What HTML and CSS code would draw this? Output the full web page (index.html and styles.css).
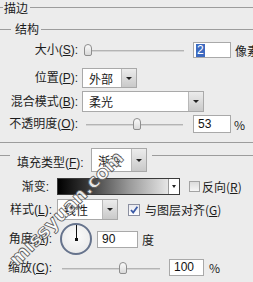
FILE: index.html
```html
<!DOCTYPE html>
<html lang="zh-CN">
<head>
<meta charset="utf-8">
<title>描边</title>
<link rel="stylesheet" href="styles.css">
</head>
<body>
<div class="dialog">
  <div class="legend legend-top">
    <span class="line l-3"></span>
    <span class="ltext t-top">描边</span>
    <span class="line grow"></span>
  </div>
  <div class="legend legend-sub">
    <span class="line l-11"></span>
    <span class="ltext t-sub">结构</span>
    <span class="line grow"></span>
  </div>

  <div class="row row-size">
    <span class="lbl lbl-78">大小(<u>S</u>):</span>
    <div class="slider sl-size"><span class="track"></span><span class="thumb" style="left:0px"></span></div>
    <div class="field f-size"><span class="hl">2</span></div>
    <span class="unit">像素</span>
  </div>

  <div class="row row-pos">
    <span class="lbl lbl-78">位置(<u>P</u>):</span>
    <div class="select s-pos"><span class="sval">外部</span><span class="sbtn"><i class="tri"></i></span></div>
  </div>

  <div class="row row-blend">
    <span class="lbl lbl-78">混合模式(<u>B</u>):</span>
    <div class="select s-blend"><span class="sval">柔光</span><span class="sbtn"><i class="tri"></i></span></div>
  </div>

  <div class="row row-opa">
    <span class="lbl lbl-78">不透明度(<u>O</u>):</span>
    <div class="slider sl-opa"><span class="track"></span><span class="thumb" style="left:47px"></span></div>
    <div class="field f-opa">53</div>
    <span class="unit u-pct">%</span>
  </div>

  <div class="sep"></div>

  <div class="legend legend-fill">
    <span class="line l-10"></span>
    <span class="lbl lbl-fill">填充类型(<u>F</u>):</span>
    <div class="select s-fill"><span class="sval">渐变</span><span class="sbtn"><i class="tri"></i></span></div>
    <span class="line grow l-fillr"></span>
  </div>

  <div class="row row-grad">
    <span class="lbl lbl-49">渐变:</span>
    <div class="gradbox"><span class="gfill"></span><span class="gbtn"><i class="tri small"></i></span></div>
    <span class="check c-rev"></span>
    <span class="ctext">反向(<u>R</u>)</span>
  </div>

  <div class="row row-style">
    <span class="lbl lbl-52">样式(<u>L</u>):</span>
    <div class="select s-style"><span class="sval">线性</span><span class="sbtn"><i class="tri"></i></span></div>
    <span class="check checked c-align"><svg width="10" height="10" viewBox="0 0 10 10"><path d="M2 5 L4.2 7.6 L8.4 1.8" fill="none" stroke="#3b5aa6" stroke-width="1.8"/></svg></span>
    <span class="ctext">与图层对齐(<u>G</u>)</span>
  </div>

  <div class="row row-angle">
    <span class="lbl lbl-52">角度(<u>A</u>):</span>
    <div class="dial"><span class="hand"></span><span class="dot"></span></div>
    <div class="field f-angle">90</div>
    <span class="unit">度</span>
  </div>

  <div class="row row-scale">
    <span class="lbl lbl-52">缩放(<u>C</u>):</span>
    <div class="slider sl-scale"><span class="track"></span><span class="thumb" style="left:57px"></span></div>
    <div class="field f-scale">100</div>
    <span class="unit u-pct2">%</span>
  </div>

  <div class="watermark">missyuan.com</div>
</div>
</body>
</html>
```

FILE: styles.css
```css
* { box-sizing: border-box; }
html, body { margin: 0; padding: 0; }
body {
  width: 253px;
  height: 282px;
  overflow: hidden;
  background: #ececec;
  font-family: "Liberation Sans", "Noto Sans CJK SC", sans-serif;
  font-size: 12px;
  color: #1c1c1c;
}
.dialog { position: relative; width: 253px; height: 282px; overflow: hidden; }
u { text-decoration: underline; text-underline-offset: 1px; }

/* group legends */
.legend { display: flex; align-items: center; height: 14px; }
.line { display: block; height: 1px; background: #9c9c9c; flex: none; }
.grow { flex: 1; }
.l-3 { width: 3px; }
.l-11 { width: 11px; }
.l-10 { width: 10px; }
.ltext { line-height: 14px; font-family: "Noto Sans CJK SC", sans-serif; }
.t-top { margin: 0 2px 0 1px; }
.t-sub { margin: 0 2px 0 4px; }
.legend-top { margin-top: 1px; height: 13px; }
.legend-sub { margin-top: 8px; }

/* rows */
.row { display: flex; align-items: center; white-space: nowrap; }
.lbl { flex: none; text-align: right; white-space: nowrap; line-height: 14px; }
.lbl-78 { width: 78px; }
.lbl-52 { width: 52px; }
.lbl-49 { width: 49px; }
.row-size { margin-top: 6px; height: 16px; }
.row-pos { margin-top: 10px; height: 20px; }
.row-blend { margin-top: 3px; height: 21px; }
.row-opa { margin-top: 3px; height: 18px; }

/* slider */
.slider { position: relative; flex: none; height: 12px; }
.track { position: absolute; left: 0; right: 0; top: 6px; height: 2px; background: #d4d4d4; border-top: 1px solid #b4b4b4; }
.thumb {
  position: absolute; top: 0; width: 8px; height: 12px;
  background: linear-gradient(#fbfbfb, #d9d9d9);
  border: 1px solid #8e8e8e;
  border-radius: 4px 4px 2px 2px;
}
.sl-size { margin-left: 6px; width: 100px; }
.sl-opa { margin-left: 8px; width: 97px; }
.sl-scale { margin-left: 10px; width: 98px; }

/* text fields */
.field {
  flex: none; background: #fff; border: 1px solid #a9a9a9;
  height: 17px; line-height: 15px; padding-left: 4px; font-size: 12px; color: #111;
}
.f-size { margin-left: 9px; width: 38px; height: 16px; line-height: 14px; padding-left: 2px; }
.hl { background: #3d6ac0; color: #fff; padding: 0 1px; display: inline-block; line-height: 13px; }
.f-opa { margin-left: 10px; width: 38px; height: 18px; line-height: 16px; }
.f-angle { margin-left: 5px; width: 41px; }
.f-scale { margin-left: 9px; width: 35px; }
.unit { flex: none; white-space: nowrap; margin-left: 4px; font-family: "Noto Sans CJK SC", sans-serif; }
.u-pct { margin-left: 3px; }
.u-pct2 { margin-left: 5px; }

/* select */
.select {
  flex: none; display: flex; background: #fff; border: 1px solid #a9a9a9;
  margin-left: 4px;
}
.sval { flex: 1; padding-left: 6px; font-family: "Noto Sans CJK SC", sans-serif; display: flex; align-items: center; }
.sbtn {
  flex: none; width: 15px; border-left: 1px solid #b8b8b8;
  background: linear-gradient(#ececec, #c9c9c9);
  display: flex; align-items: center; justify-content: center;
}
.tri { display: block; width: 0; height: 0; border-left: 3px solid transparent; border-right: 3px solid transparent; border-top: 3px solid #222; }
.s-pos { width: 55px; height: 20px; }
.s-blend { width: 122px; height: 21px; }
.s-fill { width: 56px; height: 24px; margin-left: 5px; }
.s-style { width: 61px; height: 21px; margin-left: 5px; }

/* separator */
.sep { margin-top: 9px; height: 1px; background: #9c9c9c; }

/* fill legend */
.legend-fill { margin-top: 5px; height: 24px; align-items: flex-start; }
.legend-fill .line { margin-top: 7px; }
.lbl-fill { margin-left: 7px; width: 69px; padding-top: 8px; text-align: left; }
.l-fillr { margin-left: 5px; }

/* gradient */
.row-grad { margin-top: 6px; height: 17px; }
.gradbox { flex: none; margin-left: 8px; width: 123px; height: 17px; display: flex; border: 1px solid #3a3a3a; background: #fff; }
.gfill { flex: 1; background: linear-gradient(90deg, #000 0%, #333 25%, #9a9a9a 65%, #e6e6e6 100%); }
.gbtn { flex: none; width: 11px; border-left: 1px solid #9a9a9a; display: flex; align-items: center; justify-content: center; background: #fff; }
.tri.small { border-left-width: 2.5px; border-right-width: 2.5px; border-top-width: 3px; }
.check {
  flex: none; width: 11px; height: 11px; border: 1px solid #a3a3a3;
  background: linear-gradient(#dcdcdc, #f6f6f6);
  display: flex; align-items: center; justify-content: center;
}
.checked { width: 12px; height: 12px; border-color: #8b8fa0; background: linear-gradient(#e9e9ee, #fdfdff); }
.c-rev { margin-left: 9px; }
.ctext { margin-left: 2px; font-family: "Noto Sans CJK SC", sans-serif; }
.row-style { margin-top: 4px; height: 21px; }
.c-align { margin-left: 10px; }
.row-style .ctext { margin-left: 5px; }

/* angle dial */
.row-angle { margin-top: 3px; height: 32px; }
.dial {
  flex: none; position: relative; margin-left: 8px; width: 32px; height: 32px; border-radius: 50%;
  border: 2px solid #66738c; background: radial-gradient(circle at 50% 40%, #fbfbfb, #e6e6e6);
}
.hand { position: absolute; left: 14px; top: 0; width: 1px; height: 15px; background: #111; }
.dot { position: absolute; left: 13px; top: 13px; width: 3px; height: 3px; background: #111; }

.row-scale { margin-top: 4px; height: 17px; }

/* watermark */
.watermark {
  position: absolute; left: 12px; top: 251px;
  transform: rotate(-45deg); transform-origin: left center;
  font-family: "DejaVu Sans", sans-serif; font-weight: bold; font-size: 19px; line-height: 22px;
  color: rgba(255,255,255,0.9);
  -webkit-text-stroke: 0.8px #5a5a5a;
  white-space: nowrap;
}
```
